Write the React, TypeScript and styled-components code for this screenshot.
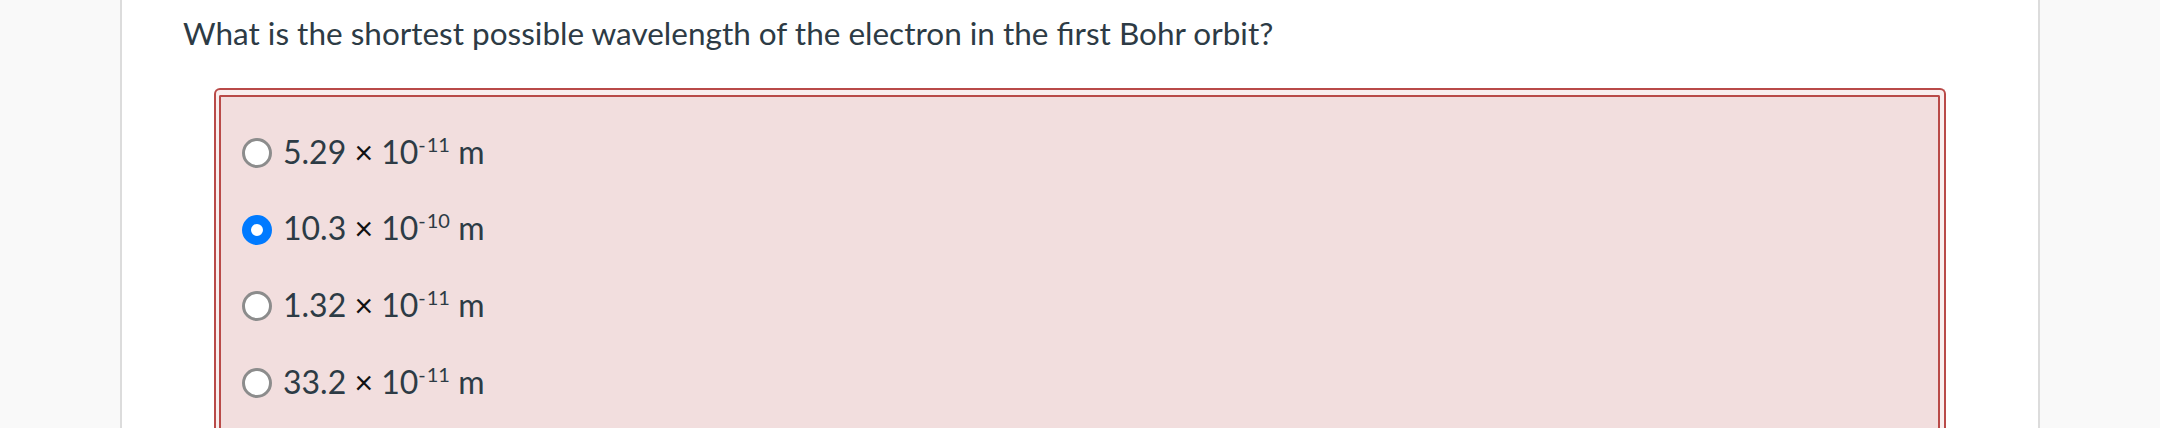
import styled, { createGlobalStyle } from 'styled-components';

interface IAnswer {
  value: string;
  exponent: string;
  selected?: boolean;
}

const answers: IAnswer[] = [
  { value: '5.29', exponent: '11' },
  { value: '10.3', exponent: '10', selected: true },
  { value: '1.32', exponent: '11' },
  { value: '33.2', exponent: '11' },
];

export default function App() {
  return (
    <>
      <GlobalStyle />
      <S.Page>
        <S.Rail side='left' />
        <S.Main>
          <S.Question>What is the shortest possible wavelength of the electron in the first Bohr orbit?</S.Question>
          <S.AnswerFrame>
            <S.AnswerBox>
              {answers.map((a) => (
                <S.Row key={a.value}>
                  <S.Radio selected={!!a.selected} />
                  <S.Label>
                    {a.value} <S.Times>×</S.Times> 10
                    <S.Sup>
                      <S.Minus>-</S.Minus>
                      {a.exponent}
                    </S.Sup>{' '}
                    m
                  </S.Label>
                </S.Row>
              ))}
            </S.AnswerBox>
          </S.AnswerFrame>
        </S.Main>
        <S.Rail side='right' />
      </S.Page>
    </>
  );
}

const GlobalStyle = createGlobalStyle`
  html, body {
    margin: 0;
    padding: 0;
    background: #fff;
  }
  body {
    font-family: Lato, 'Liberation Sans', sans-serif;
  }
`;

const S = {
  Page: styled.div`
    display: flex;
    height: 428px;
    overflow: hidden;
  `,
  Rail: styled.div<{ side: 'left' | 'right' }>`
    flex: 0 0 120px;
    background: #f9f9f9;
    ${(p) => (p.side === 'left' ? 'border-right' : 'border-left')}: 2px solid #dcdcdc;
  `,
  Main: styled.main`
    flex: 1;
    min-width: 0;
    background: #fff;
  `,
  Question: styled.h1`
    margin: 15px 0 0;
    padding-left: 61px;
    font-size: 31.5px;
    font-weight: 400;
    line-height: 1.2;
    color: #2d3b45;
  `,
  AnswerFrame: styled.div`
    margin: 35px 92px 0;
    padding: 5px 4px 0 3px;
    border: 2px solid #b94a48;
    border-bottom: none;
    border-radius: 6px 6px 0 0;
    background: #f9eeee;
  `,
  AnswerBox: styled.div`
    border: 2px solid #b94a48;
    border-bottom: none;
    border-radius: 2px 2px 0 0;
    background: #f2dede;
    padding: 17px 21px 40px;
  `,
  Row: styled.div`
    display: flex;
    align-items: center;
    height: 76.6px;
  `,
  Radio: styled.span<{ selected: boolean }>`
    box-sizing: border-box;
    flex: 0 0 30px;
    width: 30px;
    height: 30px;
    margin: 2px 11px 0 0;
    border-radius: 50%;
    background: #fff;
    border: ${(p) => (p.selected ? '9px solid #007aff' : '3px solid #8c8c8c')};
  `,
  Label: styled.span`
    font-size: 32px;
    line-height: 1.2;
    color: #2d3b45;
    white-space: nowrap;
  `,
  Times: styled.span`
    color: #111;
  `,
  Sup: styled.sup`
    font-size: 20px;
    line-height: 0;
    vertical-align: 12px;
  `,
  Minus: styled.span`
    margin-right: 1px;
  `,
};
